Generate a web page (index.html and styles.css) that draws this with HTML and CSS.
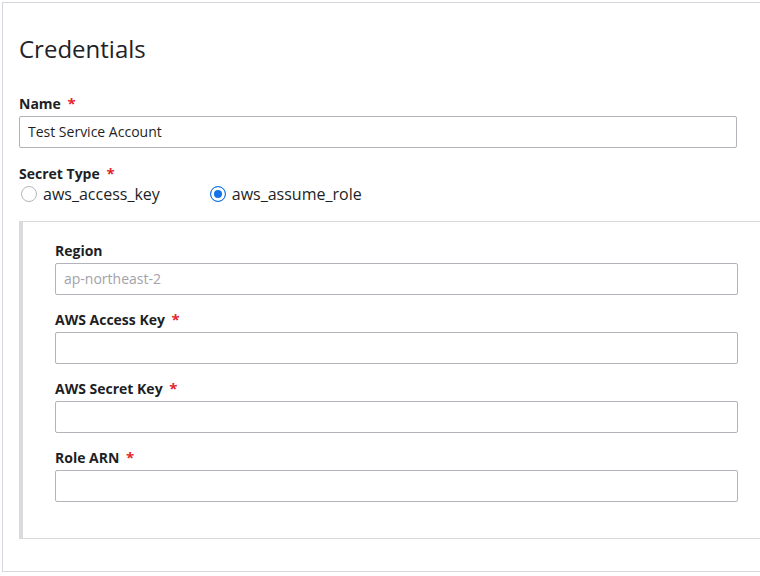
FILE: index.html
```html
<!DOCTYPE html>
<html lang="en">
<head>
<meta charset="utf-8">
<title>Credentials</title>
<link rel="stylesheet" href="styles.css">
</head>
<body>
<div class="card">
  <h1 class="title">Credentials</h1>
  <div class="top-form">
    <div class="field">
      <label class="label">Name <span class="req">*</span></label>
      <input class="input" type="text" value="Test Service Account">
    </div>
    <div class="field field-radio">
      <label class="label">Secret Type <span class="req">*</span></label>
      <div class="radios">
        <label class="radio-item"><input class="radio" type="radio" name="st"><span>aws_access_key</span></label>
        <label class="radio-item"><input class="radio" type="radio" name="st" checked><span>aws_assume_role</span></label>
      </div>
    </div>
  </div>
  <div class="panel">
    <div class="panel-form">
      <div class="field">
        <label class="label">Region</label>
        <input class="input" type="text" placeholder="ap-northeast-2">
      </div>
      <div class="field">
        <label class="label">AWS Access Key <span class="req">*</span></label>
        <input class="input" type="text">
      </div>
      <div class="field">
        <label class="label">AWS Secret Key <span class="req">*</span></label>
        <input class="input" type="text">
      </div>
      <div class="field last">
        <label class="label">Role ARN <span class="req">*</span></label>
        <input class="input" type="text">
      </div>
    </div>
  </div>
</div>
</body>
</html>
```

FILE: styles.css
```css
html, body {
  margin: 0;
  padding: 0;
  background: #ffffff;
}
body {
  font-family: "Open Sans", "Noto Sans", sans-serif;
  color: #1d1f25;
  padding: 2px 0 0 2px;
}
.card {
  border: 1px solid #d6d6dc;
  border-right: none;
  padding: 30px 0 32px 16px;
}
.title {
  margin: 0 0 28px 0;
  font-size: 24px;
  line-height: 32px;
  font-weight: 400;
  color: #1f2228;
}
.top-form {
  width: 718px;
}
.field {
  display: flex;
  flex-direction: column;
  margin-bottom: 15px;
}
.label {
  display: block;
  font-size: 14px;
  line-height: 20px;
  height: 20px;
  padding-top: 1px;
  font-weight: 700;
  color: #1d1f25;
  margin-bottom: 2px;
}
.req {
  color: #e4262c;
  font-weight: 700;
  margin-left: 3px;
  font-size: 15px;
  line-height: 14px;
}
.input {
  box-sizing: border-box;
  height: 32px;
  width: 100%;
  border: 1px solid #b3b3ba;
  border-radius: 2px;
  padding: 0 8px 1px 8px;
  font-family: "Open Sans", "Noto Sans", sans-serif;
  font-size: 14px;
  color: #1d1f25;
  background: #fff;
  margin: 0;
  outline: none;
}
.input::placeholder {
  color: #a2a2aa;
}
.field-radio {
  margin-bottom: 16px;
}
.field-radio .label {
  margin-bottom: -1px;
}
.radios {
  display: flex;
  align-items: center;
  gap: 48px;
  height: 22px;
}
.radio-item {
  display: flex;
  align-items: center;
  gap: 6px;
  font-size: 16px;
  line-height: 22px;
  color: #1d1f25;
}
.radio {
  appearance: none;
  -webkit-appearance: none;
  width: 16px;
  height: 16px;
  margin: 0 0 0 2px;
  border: 1px solid #b5b5bc;
  border-radius: 50%;
  background: #fff;
  box-sizing: border-box;
}
.radio:checked {
  border-color: #1473e6;
  background: #1473e6;
  box-shadow: inset 0 0 0 3px #fff;
}
.panel {
  border-top: 1px solid #d9d9de;
  border-bottom: 1px solid #d9d9de;
  border-left: 4px solid #d9d9de;
  padding: 18px 0 36px 32px;
}
.panel-form {
  width: 683px;
}
.panel .field {
  margin-bottom: 14px;
}
.panel .field.last {
  margin-bottom: 0;
}
```
